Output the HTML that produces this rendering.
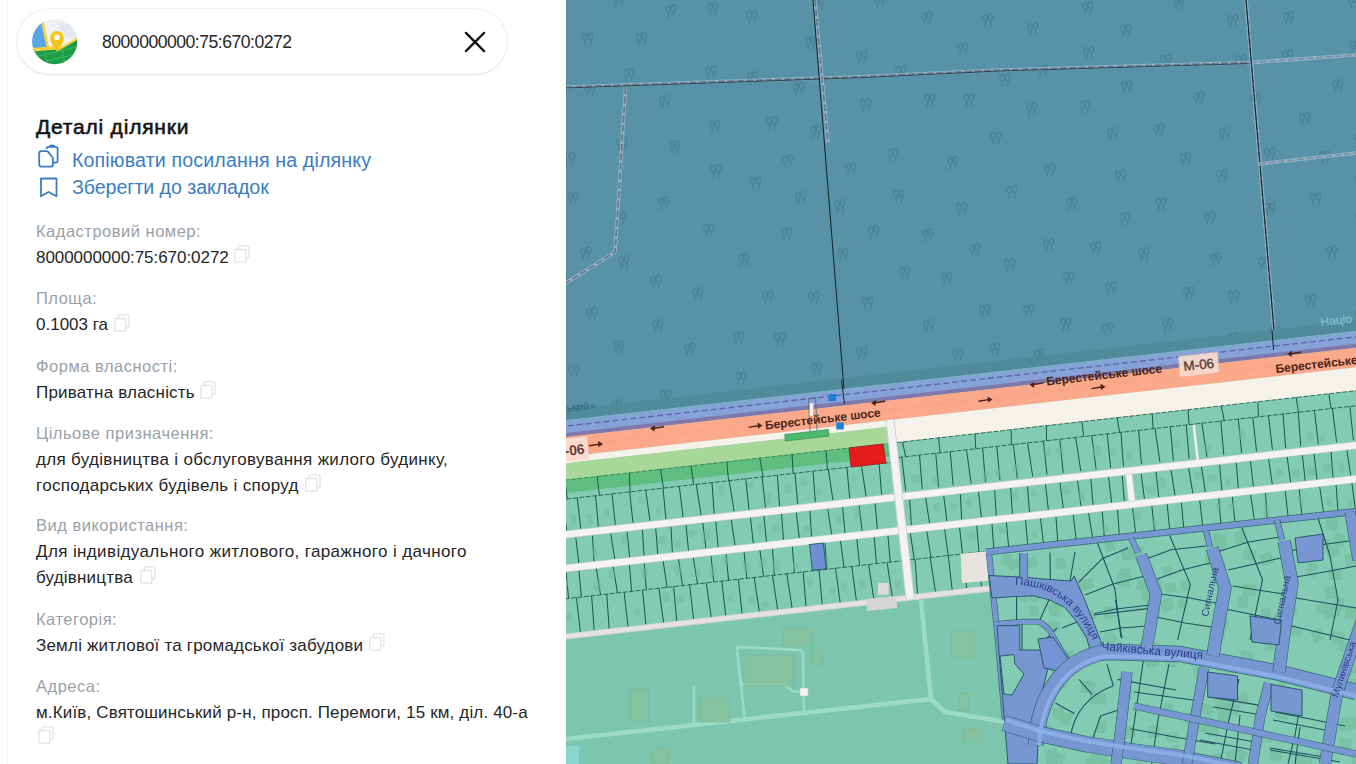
<!DOCTYPE html>
<html><head><meta charset="utf-8">
<style>
html,body{margin:0;padding:0;width:1356px;height:764px;overflow:hidden;background:#fff;}
body{position:relative;font-family:"Liberation Sans",sans-serif;}
.t{position:absolute;white-space:nowrap;line-height:1;}
.lab{font-size:16.5px;color:#9aa1a8;letter-spacing:0.5px;}
.val{font-size:17px;color:#262626;letter-spacing:0.2px;}
.lnk{font-size:19.6px;color:#3b7dc0;letter-spacing:0.15px;}
.cp{position:absolute;width:16px;height:18px;}
#map{position:absolute;left:566px;top:0;width:790px;height:764px;overflow:hidden;background:#5891a5;}
</style></head><body>
<!-- left panel faint borders -->
<div style="position:absolute;left:7px;top:0;width:1px;height:764px;background:#f6f6f6"></div>
<div style="position:absolute;left:559px;top:0;width:1px;height:764px;background:#fbfbfb"></div>

<!-- search card -->
<div style="position:absolute;left:17px;top:9px;width:490px;height:65px;border-radius:33px;background:#fff;box-shadow:0 1px 3px rgba(0,0,0,0.10), 0 0 0 1px rgba(0,0,0,0.035);"></div>
<svg style="position:absolute;left:32px;top:19px" width="46" height="46" viewBox="0 0 46 46">
  <defs><clipPath id="lc"><circle cx="22.7" cy="22.6" r="22.6"/></clipPath></defs>
  <g clip-path="url(#lc)">
    <rect x="0" y="0" width="46" height="46" fill="#eef2f5"/>
    <path d="M26,3 Q36,2 44,12 L46,22 L30,16 Z" fill="#e4e9ef"/>
    <polygon points="0,0 9,0 15,28 0,31" fill="#5aa6ea"/>
    <polygon points="8.5,0 11,0 17,28 14.5,28.5" fill="#f6d33a"/>
    <polygon points="0,30 25,28 26,31 46,19 46,46 0,46" fill="#1d9d47"/>
    <polygon points="0,29 25,27 26,29.5 46,18 46,20.5 26,32 25,30.5 0,32.5" fill="#f6d33a"/>
    <path d="M3,38 L44,28 M6,44 L44,35 M12,31 L16,46 M30,29 L33,46" stroke="#4cc46c" stroke-width="0.7" fill="none"/>
  </g>
  <path d="M25,32.5 C21,27 18.2,23.5 18.2,18.8 A6.8,6.8 0 0 1 31.8,18.8 C31.8,23.5 29,27 25,32.5 Z" fill="#f7c41a"/>
  <circle cx="25" cy="18.3" r="2.8" fill="#fff"/>
</svg>
<div class="t" style="letter-spacing:-0.1px;left:102px;top:34px;font-size:17.6px;color:#262626;letter-spacing:-0.5px">8000000000:75:670:0272</div>
<svg style="position:absolute;left:462px;top:29px" width="26" height="26" viewBox="0 0 26 26">
  <path d="M3.9,3.9 L22.1,22.1 M22.1,3.9 L3.9,22.1" stroke="#111" stroke-width="2.3" stroke-linecap="round"/>
</svg>

<!-- heading -->
<div class="t" style="left:36px;top:115.5px;font-size:21px;color:#151515;letter-spacing:0.8px;-webkit-text-stroke:0.6px #151515">Деталі ділянки</div>
<svg style="position:absolute;left:36px;top:144px" width="26" height="26" viewBox="0 0 26 26">
  <g fill="none" stroke="#3b7dc0" stroke-width="1.8" stroke-linejoin="round">
    <path d="M10.5,5 Q10.5,2.8 12.5,2.8 L19.5,2.8 Q21.6,2.8 21.6,5 L21.6,16.5 Q21.6,18.6 19.5,18.6 L16.9,18.6"/>
    <path d="M13.5,2.8 Q13.5,1.3 16,1.3 Q18.5,1.3 18.5,2.8"/>
    <path d="M3.2,9 Q3.2,7.1 5.2,7.1 L11.5,7.1 L16.9,14 L16.9,20.6 Q16.9,22.6 14.9,22.6 L5.2,22.6 Q3.2,22.6 3.2,20.6 Z"/>
  </g>
</svg>
<div class="t lnk" style="left:72px;top:150.5px">Копіювати посилання на ділянку</div>
<svg style="position:absolute;left:36px;top:175px" width="26" height="26" viewBox="0 0 26 26">
  <path d="M5,3.5 L20.5,3.5 L20.5,21.3 L12.6,17 L5,21.3 Z" fill="none" stroke="#3b7dc0" stroke-width="1.8" stroke-linejoin="round"/>
</svg>
<div class="t lnk" style="left:72px;top:178px;letter-spacing:-0.05px">Зберегти до закладок</div>

<div class="t lab" style="left:36px;top:222.7px">Кадастровий номер:</div>
<div class="t lab" style="left:36px;top:289.8px">Площа:</div>
<div class="t lab" style="left:36px;top:358.0px">Форма власності:</div>
<div class="t lab" style="left:36px;top:424.9px">Цільове призначення:</div>
<div class="t lab" style="left:36px;top:516.9px">Вид використання:</div>
<div class="t lab" style="left:36px;top:610.5px">Категорія:</div>
<div class="t lab" style="left:36px;top:678.2px">Адреса:</div>
<div class="t val" style="left:36px;top:249.1px;letter-spacing:-0.05px">8000000000:75:670:0272</div>
<div class="t val" style="letter-spacing:0.0px;left:36px;top:316.2px">0.1003 га</div>
<div class="t val" style="left:36px;top:383.8px">Приватна власність</div>
<div class="t val" style="letter-spacing:0.32px;left:36px;top:451.1px">для будівництва і обслуговування жилого будинку,</div>
<div class="t val" style="letter-spacing:0.3px;left:36px;top:476.6px">господарських будівель і споруд</div>
<div class="t val" style="letter-spacing:0.38px;left:36px;top:543.2px">Для індивідуального житлового, гаражного і дачного</div>
<div class="t val" style="left:36px;top:569.1px">будівництва</div>
<div class="t val" style="left:36px;top:637.2px">Землі житлової та громадської забудови</div>
<div class="t val" style="letter-spacing:0.15px;left:36px;top:703.6px">м.Київ, Святошинський р-н, просп. Перемоги, 15 км, діл. 40-а</div>
<svg class="cp" style="left:233.7px;top:244.7px" viewBox="0 0 16 18"><g fill="none" stroke="#e3e3e3" stroke-width="1.3"><path d="M4.2,4.5 L4.2,1.6 Q4.2,0.8 5,0.8 L14.2,0.8 Q15,0.8 15,1.6 L15,12.2 Q15,13 14.2,13 L11.8,13"/><rect x="0.8" y="4.5" width="11" height="12.7" rx="0.9"/></g></svg>
<svg class="cp" style="left:114.0px;top:314.0px" viewBox="0 0 16 18"><g fill="none" stroke="#e3e3e3" stroke-width="1.3"><path d="M4.2,4.5 L4.2,1.6 Q4.2,0.8 5,0.8 L14.2,0.8 Q15,0.8 15,1.6 L15,12.2 Q15,13 14.2,13 L11.8,13"/><rect x="0.8" y="4.5" width="11" height="12.7" rx="0.9"/></g></svg>
<svg class="cp" style="left:200.0px;top:381.0px" viewBox="0 0 16 18"><g fill="none" stroke="#e3e3e3" stroke-width="1.3"><path d="M4.2,4.5 L4.2,1.6 Q4.2,0.8 5,0.8 L14.2,0.8 Q15,0.8 15,1.6 L15,12.2 Q15,13 14.2,13 L11.8,13"/><rect x="0.8" y="4.5" width="11" height="12.7" rx="0.9"/></g></svg>
<svg class="cp" style="left:305.0px;top:474.0px" viewBox="0 0 16 18"><g fill="none" stroke="#e3e3e3" stroke-width="1.3"><path d="M4.2,4.5 L4.2,1.6 Q4.2,0.8 5,0.8 L14.2,0.8 Q15,0.8 15,1.6 L15,12.2 Q15,13 14.2,13 L11.8,13"/><rect x="0.8" y="4.5" width="11" height="12.7" rx="0.9"/></g></svg>
<svg class="cp" style="left:139.5px;top:565.5px" viewBox="0 0 16 18"><g fill="none" stroke="#e3e3e3" stroke-width="1.3"><path d="M4.2,4.5 L4.2,1.6 Q4.2,0.8 5,0.8 L14.2,0.8 Q15,0.8 15,1.6 L15,12.2 Q15,13 14.2,13 L11.8,13"/><rect x="0.8" y="4.5" width="11" height="12.7" rx="0.9"/></g></svg>
<svg class="cp" style="left:368.5px;top:633.0px" viewBox="0 0 16 18"><g fill="none" stroke="#e3e3e3" stroke-width="1.3"><path d="M4.2,4.5 L4.2,1.6 Q4.2,0.8 5,0.8 L14.2,0.8 Q15,0.8 15,1.6 L15,12.2 Q15,13 14.2,13 L11.8,13"/><rect x="0.8" y="4.5" width="11" height="12.7" rx="0.9"/></g></svg>
<svg class="cp" style="left:38.0px;top:726.0px" viewBox="0 0 16 18"><g fill="none" stroke="#e3e3e3" stroke-width="1.3"><path d="M4.2,4.5 L4.2,1.6 Q4.2,0.8 5,0.8 L14.2,0.8 Q15,0.8 15,1.6 L15,12.2 Q15,13 14.2,13 L11.8,13"/><rect x="0.8" y="4.5" width="11" height="12.7" rx="0.9"/></g></svg>

<div id="map"><svg width="790" height="764" viewBox="566 0 790 764" style="position:absolute;left:0;top:0;display:block">
<defs>
<g id="tr" fill="none" stroke="#4b8498" stroke-width="1.5" stroke-linecap="round"><path d="M3.6,8.5 C1,7 1.2,1.8 4,1.8 C6.8,1.8 7,6 5,8.5 L3.8,13.5"/><path d="M9,7.5 C6.4,6 6.6,0.8 9.4,0.8 C12.2,0.8 12.4,5 10.4,7.5 L9.2,12.5"/></g>
</defs>
<rect x="566" y="0" width="790" height="764" fill="#5792a6"/>
<g><use href="#tr" x="691" y="287"/><use href="#tr" x="1065" y="197"/><use href="#tr" x="732" y="331"/><use href="#tr" x="1203" y="211"/><use href="#tr" x="962" y="93"/><use href="#tr" x="563" y="151"/><use href="#tr" x="1026" y="22"/><use href="#tr" x="1192" y="91"/><use href="#tr" x="745" y="10"/><use href="#tr" x="1354" y="308"/><use href="#tr" x="1257" y="256"/><use href="#tr" x="956" y="42"/><use href="#tr" x="1318" y="150"/><use href="#tr" x="683" y="342"/><use href="#tr" x="659" y="389"/><use href="#tr" x="921" y="228"/><use href="#tr" x="833" y="199"/><use href="#tr" x="1249" y="93"/><use href="#tr" x="1331" y="375"/><use href="#tr" x="1161" y="318"/><use href="#tr" x="1022" y="304"/><use href="#tr" x="657" y="196"/><use href="#tr" x="886" y="148"/><use href="#tr" x="581" y="32"/><use href="#tr" x="1132" y="417"/><use href="#tr" x="955" y="202"/><use href="#tr" x="737" y="253"/><use href="#tr" x="1003" y="258"/><use href="#tr" x="704" y="65"/><use href="#tr" x="837" y="389"/><use href="#tr" x="836" y="248"/><use href="#tr" x="804" y="36"/><use href="#tr" x="612" y="340"/><use href="#tr" x="1179" y="152"/><use href="#tr" x="1104" y="281"/><use href="#tr" x="1275" y="402"/><use href="#tr" x="884" y="415"/><use href="#tr" x="1325" y="245"/><use href="#tr" x="1263" y="202"/><use href="#tr" x="859" y="98"/><use href="#tr" x="1226" y="14"/><use href="#tr" x="765" y="116"/><use href="#tr" x="894" y="65"/><use href="#tr" x="615" y="137"/><use href="#tr" x="1154" y="197"/><use href="#tr" x="761" y="402"/><use href="#tr" x="978" y="304"/><use href="#tr" x="583" y="83"/><use href="#tr" x="1227" y="332"/><use href="#tr" x="1172" y="-4"/><use href="#tr" x="579" y="246"/><use href="#tr" x="1073" y="357"/><use href="#tr" x="1025" y="102"/><use href="#tr" x="1281" y="49"/><use href="#tr" x="635" y="32"/><use href="#tr" x="1082" y="46"/><use href="#tr" x="989" y="131"/><use href="#tr" x="861" y="296"/><use href="#tr" x="1126" y="366"/><use href="#tr" x="566" y="191"/><use href="#tr" x="761" y="290"/><use href="#tr" x="807" y="291"/><use href="#tr" x="923" y="93"/><use href="#tr" x="1063" y="404"/><use href="#tr" x="1269" y="326"/><use href="#tr" x="1059" y="317"/><use href="#tr" x="1217" y="404"/><use href="#tr" x="1347" y="-5"/><use href="#tr" x="809" y="125"/><use href="#tr" x="1120" y="80"/><use href="#tr" x="781" y="154"/><use href="#tr" x="1309" y="192"/><use href="#tr" x="710" y="403"/><use href="#tr" x="1304" y="294"/><use href="#tr" x="921" y="375"/><use href="#tr" x="855" y="50"/><use href="#tr" x="1190" y="344"/><use href="#tr" x="981" y="13"/><use href="#tr" x="709" y="164"/><use href="#tr" x="1209" y="252"/><use href="#tr" x="614" y="211"/><use href="#tr" x="984" y="381"/><use href="#tr" x="1263" y="147"/><use href="#tr" x="702" y="223"/><use href="#tr" x="664" y="4"/><use href="#tr" x="658" y="95"/><use href="#tr" x="898" y="266"/><use href="#tr" x="1078" y="100"/><use href="#tr" x="873" y="-6"/><use href="#tr" x="1089" y="241"/><use href="#tr" x="1019" y="419"/><use href="#tr" x="855" y="346"/><use href="#tr" x="1114" y="169"/><use href="#tr" x="1081" y="1"/><use href="#tr" x="1137" y="247"/><use href="#tr" x="649" y="275"/><use href="#tr" x="1033" y="348"/><use href="#tr" x="1234" y="54"/><use href="#tr" x="1101" y="322"/><use href="#tr" x="1353" y="132"/><use href="#tr" x="773" y="332"/><use href="#tr" x="1118" y="212"/><use href="#tr" x="922" y="319"/><use href="#tr" x="668" y="140"/><use href="#tr" x="610" y="399"/><use href="#tr" x="1043" y="163"/><use href="#tr" x="708" y="120"/><use href="#tr" x="1106" y="127"/><use href="#tr" x="1331" y="79"/><use href="#tr" x="749" y="176"/><use href="#tr" x="746" y="71"/><use href="#tr" x="1182" y="387"/><use href="#tr" x="1159" y="54"/><use href="#tr" x="1298" y="112"/><use href="#tr" x="946" y="156"/><use href="#tr" x="940" y="272"/><use href="#tr" x="1152" y="123"/><use href="#tr" x="1036" y="64"/><use href="#tr" x="810" y="362"/><use href="#tr" x="1042" y="238"/><use href="#tr" x="1313" y="411"/><use href="#tr" x="937" y="412"/><use href="#tr" x="651" y="319"/><use href="#tr" x="617" y="255"/><use href="#tr" x="844" y="162"/><use href="#tr" x="1005" y="185"/><use href="#tr" x="780" y="227"/><use href="#tr" x="612" y="-6"/><use href="#tr" x="567" y="364"/><use href="#tr" x="1215" y="169"/><use href="#tr" x="1253" y="369"/><use href="#tr" x="706" y="2"/><use href="#tr" x="920" y="11"/><use href="#tr" x="570" y="404"/><use href="#tr" x="585" y="307"/><use href="#tr" x="988" y="342"/><use href="#tr" x="1119" y="24"/><use href="#tr" x="812" y="-4"/><use href="#tr" x="792" y="82"/><use href="#tr" x="1227" y="290"/><use href="#tr" x="892" y="189"/><use href="#tr" x="1291" y="362"/><use href="#tr" x="622" y="68"/><use href="#tr" x="1182" y="286"/><use href="#tr" x="1218" y="127"/><use href="#tr" x="734" y="371"/><use href="#tr" x="1282" y="11"/><use href="#tr" x="1348" y="40"/><use href="#tr" x="802" y="415"/><use href="#tr" x="998" y="73"/><use href="#tr" x="1354" y="173"/><use href="#tr" x="968" y="243"/><use href="#tr" x="951" y="348"/><use href="#tr" x="1354" y="211"/><use href="#tr" x="867" y="225"/><use href="#tr" x="1350" y="417"/><use href="#tr" x="1322" y="334"/><use href="#tr" x="794" y="191"/><use href="#tr" x="1062" y="271"/></g>
<g transform="translate(566,420.6) rotate(-6.45)"><rect x="-80" y="-11" width="980" height="12" fill="#4f8b9b"/></g>
<rect x="566" y="0" width="7" height="764" fill="#6a8aa8" opacity="0.18"/>
<path d="M566,87 L866,76.5 L1000,70 L1250,62.6" fill="none" stroke="#8ab2c8" stroke-width="3.6" stroke-linejoin="round"/>
<path d="M566,87 L866,76.5 L1000,70 L1250,62.6" fill="none" stroke="#6e7584" stroke-width="1.7" stroke-dasharray="7 2.5" stroke-linejoin="round"/>
<path d="M566,88 L866,77.5 L1000,71 L1250,63.6" fill="none" stroke="#1d3a48" stroke-width="0.9"/>
<path d="M1250,62.6 L1356,55" fill="none" stroke="#8fb3c8" stroke-width="3.6" stroke-linejoin="round"/>
<path d="M1250,62.6 L1356,55" fill="none" stroke="#7f8ea6" stroke-width="1.7" stroke-dasharray="7 2.5" stroke-linejoin="round"/>
<path d="M625.5,87 L618.4,200 L615,252 L566,283" fill="none" stroke="#8ab2c8" stroke-width="3.6" stroke-linejoin="round"/>
<path d="M625.5,87 L618.4,200 L615,252 L566,283" fill="none" stroke="#6e7584" stroke-width="1.7" stroke-dasharray="7 2.5" stroke-linejoin="round"/>
<path d="M815,0 L828,144" fill="none" stroke="#8ab2c8" stroke-width="3.6" stroke-linejoin="round"/>
<path d="M815,0 L828,144" fill="none" stroke="#6e7584" stroke-width="1.7" stroke-dasharray="7 2.5" stroke-linejoin="round"/>
<path d="M813,0 L845,402" fill="none" stroke="#10222c" stroke-width="1"/>
<path d="M1246,0 L1274,330" fill="none" stroke="#8ab2c8" stroke-width="3.6" stroke-linejoin="round"/>
<path d="M1246,0 L1274,330" fill="none" stroke="#6e7584" stroke-width="1.7" stroke-dasharray="7 2.5" stroke-linejoin="round"/>
<path d="M1246,0 L1274,330" fill="none" stroke="#10222c" stroke-width="1"/>
<path d="M1259,164 L1356,153" fill="none" stroke="#8fb3c8" stroke-width="3.6" stroke-linejoin="round"/>
<path d="M1259,164 L1356,153" fill="none" stroke="#7f8ea6" stroke-width="1.7" stroke-dasharray="7 2.5" stroke-linejoin="round"/>
<g transform="translate(566,420.6) rotate(-6.45)">
<rect x="-80" y="0" width="980" height="500" fill="#84cbb3" />
<rect x="-80" y="0" width="980" height="16" fill="#86a2d8" />
<rect x="-80" y="-0.5" width="980" height="2.3" fill="#7eaacb" />
<rect x="-80" y="12.3" width="980" height="4.0" fill="#7f78aa" />
<line x1="-80" y1="5.5" x2="900" y2="5.5" stroke="#4f5f98" stroke-width="1.3" stroke-dasharray="6 3" opacity="0.85"/>
<rect x="-80" y="16.3" width="980" height="19.499999999999996" fill="#fca98b" />
<line x1="-80" y1="25.5" x2="900" y2="25.5" stroke="#f5a084" stroke-width="0.8"/>
<rect x="-80" y="35.8" width="398" height="6.700000000000003" fill="#f5f2ea" />
<rect x="-80" y="42.5" width="398" height="16.5" fill="#a7d89a" />
<rect x="-80" y="59" width="398" height="13" fill="#5ebf80" />
<rect x="326" y="35.8" width="574" height="23.200000000000003" fill="#f5f2ea" />
<rect x="-80" y="217" width="980" height="283" fill="#7dc6ae" />
<line x1="-80" y1="59" x2="318" y2="59" stroke="#2c7a50" stroke-width="0.9" stroke-dasharray="5 1.5" opacity="0.8"/>
<line x1="-80" y1="78" x2="318" y2="78" stroke="#155c44" stroke-width="0.9" stroke-dasharray="5 1.5" opacity="0.9"/>
<line x1="-80" y1="177" x2="318" y2="177" stroke="#155c44" stroke-width="0.9" stroke-dasharray="5 1.5" opacity="0.9"/>
<line x1="326" y1="59" x2="900" y2="59" stroke="#155c44" stroke-width="0.9" stroke-dasharray="5 1.5" opacity="0.9"/>
<line x1="326" y1="74" x2="900" y2="74" stroke="#155c44" stroke-width="0.9" stroke-dasharray="5 1.5" opacity="0.9"/>
<line x1="326" y1="177" x2="900" y2="177" stroke="#155c44" stroke-width="0.9" stroke-dasharray="5 1.5" opacity="0.9"/>
<line x1="-40.5" y1="59" x2="-41.6" y2="78" stroke="#155c44" stroke-width="1.0"/>
<line x1="-7.7" y1="59" x2="-7.6" y2="78" stroke="#155c44" stroke-width="1.0"/>
<line x1="24.7" y1="59" x2="24.8" y2="78" stroke="#155c44" stroke-width="1.0"/>
<line x1="57.0" y1="59" x2="55.7" y2="78" stroke="#155c44" stroke-width="1.0"/>
<line x1="88.4" y1="59" x2="89.3" y2="78" stroke="#155c44" stroke-width="1.0"/>
<line x1="119.2" y1="59" x2="119.6" y2="78" stroke="#155c44" stroke-width="1.0"/>
<line x1="155.1" y1="59" x2="154.8" y2="78" stroke="#155c44" stroke-width="1.0"/>
<line x1="188.4" y1="59" x2="189.5" y2="78" stroke="#155c44" stroke-width="1.0"/>
<line x1="220.9" y1="59" x2="219.7" y2="78" stroke="#155c44" stroke-width="1.0"/>
<line x1="255.1" y1="59" x2="254.2" y2="78" stroke="#155c44" stroke-width="1.0"/>
<line x1="287.9" y1="59" x2="287.5" y2="78" stroke="#155c44" stroke-width="1.0"/>
<line x1="-61.3" y1="78" x2="-62.6" y2="109" stroke="#155c44" stroke-width="1.0"/>
<line x1="-44.1" y1="78" x2="-44.4" y2="109" stroke="#155c44" stroke-width="1.0"/>
<line x1="-28.7" y1="78" x2="-28.8" y2="109" stroke="#155c44" stroke-width="1.0"/>
<line x1="-12.3" y1="78" x2="-11.7" y2="109" stroke="#155c44" stroke-width="1.0"/>
<line x1="2.5" y1="78" x2="2.6" y2="109" stroke="#155c44" stroke-width="1.0"/>
<line x1="20.9" y1="78" x2="20.3" y2="109" stroke="#155c44" stroke-width="1.0"/>
<line x1="37.5" y1="78" x2="37.3" y2="109" stroke="#155c44" stroke-width="1.0"/>
<line x1="55.2" y1="78" x2="55.1" y2="109" stroke="#155c44" stroke-width="1.0"/>
<line x1="71.4" y1="78" x2="72.2" y2="109" stroke="#155c44" stroke-width="1.0"/>
<line x1="88.8" y1="78" x2="88.2" y2="109" stroke="#155c44" stroke-width="1.0"/>
<line x1="105.2" y1="78" x2="105.5" y2="109" stroke="#155c44" stroke-width="1.0"/>
<line x1="122.3" y1="78" x2="123.6" y2="109" stroke="#155c44" stroke-width="1.0"/>
<line x1="138.1" y1="78" x2="136.8" y2="109" stroke="#155c44" stroke-width="1.0"/>
<line x1="155.4" y1="78" x2="156.9" y2="109" stroke="#155c44" stroke-width="1.0"/>
<line x1="172.1" y1="78" x2="171.8" y2="109" stroke="#155c44" stroke-width="1.0"/>
<line x1="188.5" y1="78" x2="188.4" y2="109" stroke="#155c44" stroke-width="1.0"/>
<line x1="203.9" y1="78" x2="202.6" y2="109" stroke="#155c44" stroke-width="1.0"/>
<line x1="221.6" y1="78" x2="220.8" y2="109" stroke="#155c44" stroke-width="1.0"/>
<line x1="239.8" y1="78" x2="238.6" y2="109" stroke="#155c44" stroke-width="1.0"/>
<line x1="255.2" y1="78" x2="256.3" y2="109" stroke="#155c44" stroke-width="1.0"/>
<line x1="273.9" y1="78" x2="273.2" y2="109" stroke="#155c44" stroke-width="1.0"/>
<line x1="288.5" y1="78" x2="289.7" y2="109" stroke="#155c44" stroke-width="1.0"/>
<line x1="306.3" y1="78" x2="305.3" y2="109" stroke="#155c44" stroke-width="1.0"/>
<line x1="-55.8" y1="117" x2="-55.8" y2="143" stroke="#155c44" stroke-width="1.0"/>
<line x1="-39.0" y1="117" x2="-40.4" y2="143" stroke="#155c44" stroke-width="1.0"/>
<line x1="-22.6" y1="117" x2="-22.4" y2="143" stroke="#155c44" stroke-width="1.0"/>
<line x1="-3.4" y1="117" x2="-3.3" y2="143" stroke="#155c44" stroke-width="1.0"/>
<line x1="13.4" y1="117" x2="12.1" y2="143" stroke="#155c44" stroke-width="1.0"/>
<line x1="31.8" y1="117" x2="32.9" y2="143" stroke="#155c44" stroke-width="1.0"/>
<line x1="48.2" y1="117" x2="47.9" y2="143" stroke="#155c44" stroke-width="1.0"/>
<line x1="63.7" y1="117" x2="62.4" y2="143" stroke="#155c44" stroke-width="1.0"/>
<line x1="77.1" y1="117" x2="76.1" y2="143" stroke="#155c44" stroke-width="1.0"/>
<line x1="92.4" y1="117" x2="90.9" y2="143" stroke="#155c44" stroke-width="1.0"/>
<line x1="107.6" y1="117" x2="107.1" y2="143" stroke="#155c44" stroke-width="1.0"/>
<line x1="124.4" y1="117" x2="124.7" y2="143" stroke="#155c44" stroke-width="1.0"/>
<line x1="137.5" y1="117" x2="137.0" y2="143" stroke="#155c44" stroke-width="1.0"/>
<line x1="153.0" y1="117" x2="154.0" y2="143" stroke="#155c44" stroke-width="1.0"/>
<line x1="172.4" y1="117" x2="172.3" y2="143" stroke="#155c44" stroke-width="1.0"/>
<line x1="186.0" y1="117" x2="185.6" y2="143" stroke="#155c44" stroke-width="1.0"/>
<line x1="203.7" y1="117" x2="202.7" y2="143" stroke="#155c44" stroke-width="1.0"/>
<line x1="218.5" y1="117" x2="218.6" y2="143" stroke="#155c44" stroke-width="1.0"/>
<line x1="232.3" y1="117" x2="230.9" y2="143" stroke="#155c44" stroke-width="1.0"/>
<line x1="250.1" y1="117" x2="251.2" y2="143" stroke="#155c44" stroke-width="1.0"/>
<line x1="265.1" y1="117" x2="264.7" y2="143" stroke="#155c44" stroke-width="1.0"/>
<line x1="281.7" y1="117" x2="281.8" y2="143" stroke="#155c44" stroke-width="1.0"/>
<line x1="297.9" y1="117" x2="297.1" y2="143" stroke="#155c44" stroke-width="1.0"/>
<line x1="-48.5" y1="150" x2="-47.5" y2="177" stroke="#155c44" stroke-width="1.0"/>
<line x1="-31.4" y1="150" x2="-30.7" y2="177" stroke="#155c44" stroke-width="1.0"/>
<line x1="-17.0" y1="150" x2="-17.4" y2="177" stroke="#155c44" stroke-width="1.0"/>
<line x1="-4.0" y1="150" x2="-4.6" y2="177" stroke="#155c44" stroke-width="1.0"/>
<line x1="13.5" y1="150" x2="14.8" y2="177" stroke="#155c44" stroke-width="1.0"/>
<line x1="30.4" y1="150" x2="31.8" y2="177" stroke="#155c44" stroke-width="1.0"/>
<line x1="46.9" y1="150" x2="46.0" y2="177" stroke="#155c44" stroke-width="1.0"/>
<line x1="61.7" y1="150" x2="60.8" y2="177" stroke="#155c44" stroke-width="1.0"/>
<line x1="80.7" y1="150" x2="81.7" y2="177" stroke="#155c44" stroke-width="1.0"/>
<line x1="96.3" y1="150" x2="97.2" y2="177" stroke="#155c44" stroke-width="1.0"/>
<line x1="111.0" y1="150" x2="112.3" y2="177" stroke="#155c44" stroke-width="1.0"/>
<line x1="128.8" y1="150" x2="128.8" y2="177" stroke="#155c44" stroke-width="1.0"/>
<line x1="144.1" y1="150" x2="143.6" y2="177" stroke="#155c44" stroke-width="1.0"/>
<line x1="162.2" y1="150" x2="161.9" y2="177" stroke="#155c44" stroke-width="1.0"/>
<line x1="178.1" y1="150" x2="178.8" y2="177" stroke="#155c44" stroke-width="1.0"/>
<line x1="190.8" y1="150" x2="189.7" y2="177" stroke="#155c44" stroke-width="1.0"/>
<line x1="210.8" y1="150" x2="209.8" y2="177" stroke="#155c44" stroke-width="1.0"/>
<line x1="229.1" y1="150" x2="229.5" y2="177" stroke="#155c44" stroke-width="1.0"/>
<line x1="243.6" y1="150" x2="242.5" y2="177" stroke="#155c44" stroke-width="1.0"/>
<line x1="259.3" y1="150" x2="259.7" y2="177" stroke="#155c44" stroke-width="1.0"/>
<line x1="275.7" y1="150" x2="275.5" y2="177" stroke="#155c44" stroke-width="1.0"/>
<line x1="293.2" y1="150" x2="292.4" y2="177" stroke="#155c44" stroke-width="1.0"/>
<line x1="307.0" y1="150" x2="306.3" y2="177" stroke="#155c44" stroke-width="1.0"/>
<line x1="-58.7" y1="177" x2="-59.0" y2="212" stroke="#155c44" stroke-width="1.0"/>
<line x1="-41.8" y1="177" x2="-42.3" y2="212" stroke="#155c44" stroke-width="1.0"/>
<line x1="-26.6" y1="177" x2="-25.4" y2="212" stroke="#155c44" stroke-width="1.0"/>
<line x1="-9.5" y1="177" x2="-9.5" y2="212" stroke="#155c44" stroke-width="1.0"/>
<line x1="5.8" y1="177" x2="4.4" y2="212" stroke="#155c44" stroke-width="1.0"/>
<line x1="21.0" y1="177" x2="19.5" y2="212" stroke="#155c44" stroke-width="1.0"/>
<line x1="38.5" y1="177" x2="38.5" y2="212" stroke="#155c44" stroke-width="1.0"/>
<line x1="57.0" y1="177" x2="56.5" y2="212" stroke="#155c44" stroke-width="1.0"/>
<line x1="73.5" y1="177" x2="74.3" y2="212" stroke="#155c44" stroke-width="1.0"/>
<line x1="88.3" y1="177" x2="87.5" y2="212" stroke="#155c44" stroke-width="1.0"/>
<line x1="104.4" y1="177" x2="104.5" y2="212" stroke="#155c44" stroke-width="1.0"/>
<line x1="121.1" y1="177" x2="122.3" y2="212" stroke="#155c44" stroke-width="1.0"/>
<line x1="136.8" y1="177" x2="136.8" y2="212" stroke="#155c44" stroke-width="1.0"/>
<line x1="153.5" y1="177" x2="153.3" y2="212" stroke="#155c44" stroke-width="1.0"/>
<line x1="169.4" y1="177" x2="170.7" y2="212" stroke="#155c44" stroke-width="1.0"/>
<line x1="187.8" y1="177" x2="189.1" y2="212" stroke="#155c44" stroke-width="1.0"/>
<line x1="202.2" y1="177" x2="203.6" y2="212" stroke="#155c44" stroke-width="1.0"/>
<line x1="218.7" y1="177" x2="217.6" y2="212" stroke="#155c44" stroke-width="1.0"/>
<line x1="234.7" y1="177" x2="233.9" y2="212" stroke="#155c44" stroke-width="1.0"/>
<line x1="251.2" y1="177" x2="252.0" y2="212" stroke="#155c44" stroke-width="1.0"/>
<line x1="267.6" y1="177" x2="268.3" y2="212" stroke="#155c44" stroke-width="1.0"/>
<line x1="284.6" y1="177" x2="285.8" y2="212" stroke="#155c44" stroke-width="1.0"/>
<line x1="303.1" y1="177" x2="304.5" y2="212" stroke="#155c44" stroke-width="1.0"/>
<line x1="332.0" y1="59" x2="333.4" y2="74" stroke="#155c44" stroke-width="1.0"/>
<line x1="368.3" y1="59" x2="368.1" y2="74" stroke="#155c44" stroke-width="1.0"/>
<line x1="404.9" y1="59" x2="404.0" y2="74" stroke="#155c44" stroke-width="1.0"/>
<line x1="441.3" y1="59" x2="439.9" y2="74" stroke="#155c44" stroke-width="1.0"/>
<line x1="476.7" y1="59" x2="475.3" y2="74" stroke="#155c44" stroke-width="1.0"/>
<line x1="512.6" y1="59" x2="512.6" y2="74" stroke="#155c44" stroke-width="1.0"/>
<line x1="547.9" y1="59" x2="548.8" y2="74" stroke="#155c44" stroke-width="1.0"/>
<line x1="583.2" y1="59" x2="582.5" y2="74" stroke="#155c44" stroke-width="1.0"/>
<line x1="619.3" y1="59" x2="618.7" y2="74" stroke="#155c44" stroke-width="1.0"/>
<line x1="652.8" y1="59" x2="654.0" y2="74" stroke="#155c44" stroke-width="1.0"/>
<line x1="689.6" y1="59" x2="688.5" y2="74" stroke="#155c44" stroke-width="1.0"/>
<line x1="728.2" y1="59" x2="728.8" y2="74" stroke="#155c44" stroke-width="1.0"/>
<line x1="761.0" y1="59" x2="761.6" y2="74" stroke="#155c44" stroke-width="1.0"/>
<line x1="796.8" y1="59" x2="798.1" y2="74" stroke="#155c44" stroke-width="1.0"/>
<line x1="835.5" y1="59" x2="834.2" y2="74" stroke="#155c44" stroke-width="1.0"/>
<line x1="870.7" y1="59" x2="871.8" y2="74" stroke="#155c44" stroke-width="1.0"/>
<line x1="329.5" y1="74" x2="329.7" y2="108" stroke="#155c44" stroke-width="1.0"/>
<line x1="347.4" y1="74" x2="346.3" y2="108" stroke="#155c44" stroke-width="1.0"/>
<line x1="363.8" y1="74" x2="362.7" y2="108" stroke="#155c44" stroke-width="1.0"/>
<line x1="378.3" y1="74" x2="377.4" y2="108" stroke="#155c44" stroke-width="1.0"/>
<line x1="394.7" y1="74" x2="395.5" y2="108" stroke="#155c44" stroke-width="1.0"/>
<line x1="410.9" y1="74" x2="409.9" y2="108" stroke="#155c44" stroke-width="1.0"/>
<line x1="425.2" y1="74" x2="424.5" y2="108" stroke="#155c44" stroke-width="1.0"/>
<line x1="441.8" y1="74" x2="442.0" y2="108" stroke="#155c44" stroke-width="1.0"/>
<line x1="456.2" y1="74" x2="457.5" y2="108" stroke="#155c44" stroke-width="1.0"/>
<line x1="472.1" y1="74" x2="471.9" y2="108" stroke="#155c44" stroke-width="1.0"/>
<line x1="488.5" y1="74" x2="488.2" y2="108" stroke="#155c44" stroke-width="1.0"/>
<line x1="504.5" y1="74" x2="505.9" y2="108" stroke="#155c44" stroke-width="1.0"/>
<line x1="520.7" y1="74" x2="521.3" y2="108" stroke="#155c44" stroke-width="1.0"/>
<line x1="536.3" y1="74" x2="535.9" y2="108" stroke="#155c44" stroke-width="1.0"/>
<line x1="550.1" y1="74" x2="548.8" y2="108" stroke="#155c44" stroke-width="1.0"/>
<line x1="567.9" y1="74" x2="566.9" y2="108" stroke="#155c44" stroke-width="1.0"/>
<line x1="584.4" y1="74" x2="585.5" y2="108" stroke="#155c44" stroke-width="1.0"/>
<line x1="599.8" y1="74" x2="599.0" y2="108" stroke="#155c44" stroke-width="1.0"/>
<line x1="615.9" y1="74" x2="614.8" y2="108" stroke="#155c44" stroke-width="1.0"/>
<line x1="631.5" y1="74" x2="632.9" y2="108" stroke="#155c44" stroke-width="1.0"/>
<line x1="650.6" y1="74" x2="649.8" y2="108" stroke="#155c44" stroke-width="1.0"/>
<line x1="668.2" y1="74" x2="667.7" y2="108" stroke="#155c44" stroke-width="1.0"/>
<line x1="682.8" y1="74" x2="682.7" y2="108" stroke="#155c44" stroke-width="1.0"/>
<line x1="698.6" y1="74" x2="698.7" y2="108" stroke="#155c44" stroke-width="1.0"/>
<line x1="713.3" y1="74" x2="712.0" y2="108" stroke="#155c44" stroke-width="1.0"/>
<line x1="728.6" y1="74" x2="727.2" y2="108" stroke="#155c44" stroke-width="1.0"/>
<line x1="744.8" y1="74" x2="745.0" y2="108" stroke="#155c44" stroke-width="1.0"/>
<line x1="762.9" y1="74" x2="763.3" y2="108" stroke="#155c44" stroke-width="1.0"/>
<line x1="780.5" y1="74" x2="780.2" y2="108" stroke="#155c44" stroke-width="1.0"/>
<line x1="796.5" y1="74" x2="795.5" y2="108" stroke="#155c44" stroke-width="1.0"/>
<line x1="812.8" y1="74" x2="811.4" y2="108" stroke="#155c44" stroke-width="1.0"/>
<line x1="831.3" y1="74" x2="831.7" y2="108" stroke="#155c44" stroke-width="1.0"/>
<line x1="848.4" y1="74" x2="847.3" y2="108" stroke="#155c44" stroke-width="1.0"/>
<line x1="863.9" y1="74" x2="865.0" y2="108" stroke="#155c44" stroke-width="1.0"/>
<line x1="882.5" y1="74" x2="882.8" y2="108" stroke="#155c44" stroke-width="1.0"/>
<line x1="900.1" y1="74" x2="900.7" y2="108" stroke="#155c44" stroke-width="1.0"/>
<line x1="332.6" y1="117" x2="331.5" y2="143" stroke="#155c44" stroke-width="1.0"/>
<line x1="348.7" y1="117" x2="349.7" y2="143" stroke="#155c44" stroke-width="1.0"/>
<line x1="366.9" y1="117" x2="367.2" y2="143" stroke="#155c44" stroke-width="1.0"/>
<line x1="383.6" y1="117" x2="382.1" y2="143" stroke="#155c44" stroke-width="1.0"/>
<line x1="401.9" y1="117" x2="401.9" y2="143" stroke="#155c44" stroke-width="1.0"/>
<line x1="418.2" y1="117" x2="416.9" y2="143" stroke="#155c44" stroke-width="1.0"/>
<line x1="434.3" y1="117" x2="433.1" y2="143" stroke="#155c44" stroke-width="1.0"/>
<line x1="451.2" y1="117" x2="450.3" y2="143" stroke="#155c44" stroke-width="1.0"/>
<line x1="469.3" y1="117" x2="469.3" y2="143" stroke="#155c44" stroke-width="1.0"/>
<line x1="483.8" y1="117" x2="484.3" y2="143" stroke="#155c44" stroke-width="1.0"/>
<line x1="501.6" y1="117" x2="502.1" y2="143" stroke="#155c44" stroke-width="1.0"/>
<line x1="515.0" y1="117" x2="514.2" y2="143" stroke="#155c44" stroke-width="1.0"/>
<line x1="532.8" y1="117" x2="533.0" y2="143" stroke="#155c44" stroke-width="1.0"/>
<line x1="546.5" y1="117" x2="545.8" y2="143" stroke="#155c44" stroke-width="1.0"/>
<line x1="565.5" y1="117" x2="566.0" y2="143" stroke="#155c44" stroke-width="1.0"/>
<line x1="580.5" y1="117" x2="580.4" y2="143" stroke="#155c44" stroke-width="1.0"/>
<line x1="595.6" y1="117" x2="596.8" y2="143" stroke="#155c44" stroke-width="1.0"/>
<line x1="613.4" y1="117" x2="614.7" y2="143" stroke="#155c44" stroke-width="1.0"/>
<line x1="626.3" y1="117" x2="627.3" y2="143" stroke="#155c44" stroke-width="1.0"/>
<line x1="644.5" y1="117" x2="643.8" y2="143" stroke="#155c44" stroke-width="1.0"/>
<line x1="661.3" y1="117" x2="660.4" y2="143" stroke="#155c44" stroke-width="1.0"/>
<line x1="675.6" y1="117" x2="675.6" y2="143" stroke="#155c44" stroke-width="1.0"/>
<line x1="693.8" y1="117" x2="694.7" y2="143" stroke="#155c44" stroke-width="1.0"/>
<line x1="712.5" y1="117" x2="713.1" y2="143" stroke="#155c44" stroke-width="1.0"/>
<line x1="727.8" y1="117" x2="727.8" y2="143" stroke="#155c44" stroke-width="1.0"/>
<line x1="739.6" y1="117" x2="739.6" y2="143" stroke="#155c44" stroke-width="1.0"/>
<line x1="756.7" y1="117" x2="755.7" y2="143" stroke="#155c44" stroke-width="1.0"/>
<line x1="772.6" y1="117" x2="773.6" y2="143" stroke="#155c44" stroke-width="1.0"/>
<line x1="788.3" y1="117" x2="789.3" y2="143" stroke="#155c44" stroke-width="1.0"/>
<line x1="803.7" y1="117" x2="804.3" y2="143" stroke="#155c44" stroke-width="1.0"/>
<line x1="819.8" y1="117" x2="819.4" y2="143" stroke="#155c44" stroke-width="1.0"/>
<line x1="837.9" y1="117" x2="838.1" y2="143" stroke="#155c44" stroke-width="1.0"/>
<line x1="852.0" y1="117" x2="851.3" y2="143" stroke="#155c44" stroke-width="1.0"/>
<line x1="865.6" y1="117" x2="866.6" y2="143" stroke="#155c44" stroke-width="1.0"/>
<line x1="883.7" y1="117" x2="882.9" y2="143" stroke="#155c44" stroke-width="1.0"/>
<line x1="897.8" y1="117" x2="896.9" y2="143" stroke="#155c44" stroke-width="1.0"/>
<line x1="329.4" y1="150" x2="330.5" y2="177" stroke="#155c44" stroke-width="1.0"/>
<line x1="346.0" y1="150" x2="347.3" y2="177" stroke="#155c44" stroke-width="1.0"/>
<line x1="364.0" y1="150" x2="364.6" y2="177" stroke="#155c44" stroke-width="1.0"/>
<line x1="379.1" y1="150" x2="379.0" y2="177" stroke="#155c44" stroke-width="1.0"/>
<line x1="396.3" y1="150" x2="395.6" y2="177" stroke="#155c44" stroke-width="1.0"/>
<line x1="411.7" y1="150" x2="410.6" y2="177" stroke="#155c44" stroke-width="1.0"/>
<line x1="426.2" y1="150" x2="425.6" y2="177" stroke="#155c44" stroke-width="1.0"/>
<line x1="445.5" y1="150" x2="444.8" y2="177" stroke="#155c44" stroke-width="1.0"/>
<line x1="460.5" y1="150" x2="460.7" y2="177" stroke="#155c44" stroke-width="1.0"/>
<line x1="476.1" y1="150" x2="475.0" y2="177" stroke="#155c44" stroke-width="1.0"/>
<line x1="493.5" y1="150" x2="493.5" y2="177" stroke="#155c44" stroke-width="1.0"/>
<line x1="508.8" y1="150" x2="510.3" y2="177" stroke="#155c44" stroke-width="1.0"/>
<line x1="522.7" y1="150" x2="521.8" y2="177" stroke="#155c44" stroke-width="1.0"/>
<line x1="538.1" y1="150" x2="536.8" y2="177" stroke="#155c44" stroke-width="1.0"/>
<line x1="553.2" y1="150" x2="553.4" y2="177" stroke="#155c44" stroke-width="1.0"/>
<line x1="572.6" y1="150" x2="572.3" y2="177" stroke="#155c44" stroke-width="1.0"/>
<line x1="588.0" y1="150" x2="587.6" y2="177" stroke="#155c44" stroke-width="1.0"/>
<line x1="602.3" y1="150" x2="601.7" y2="177" stroke="#155c44" stroke-width="1.0"/>
<line x1="620.8" y1="150" x2="620.8" y2="177" stroke="#155c44" stroke-width="1.0"/>
<line x1="639.9" y1="150" x2="639.1" y2="177" stroke="#155c44" stroke-width="1.0"/>
<line x1="653.6" y1="150" x2="653.3" y2="177" stroke="#155c44" stroke-width="1.0"/>
<line x1="671.9" y1="150" x2="672.9" y2="177" stroke="#155c44" stroke-width="1.0"/>
<line x1="687.0" y1="150" x2="685.6" y2="177" stroke="#155c44" stroke-width="1.0"/>
<line x1="706.8" y1="150" x2="706.7" y2="177" stroke="#155c44" stroke-width="1.0"/>
<line x1="720.9" y1="150" x2="720.6" y2="177" stroke="#155c44" stroke-width="1.0"/>
<line x1="741.5" y1="150" x2="742.5" y2="177" stroke="#155c44" stroke-width="1.0"/>
<line x1="758.0" y1="150" x2="756.9" y2="177" stroke="#155c44" stroke-width="1.0"/>
<line x1="773.9" y1="150" x2="774.4" y2="177" stroke="#155c44" stroke-width="1.0"/>
<line x1="792.6" y1="150" x2="793.1" y2="177" stroke="#155c44" stroke-width="1.0"/>
<line x1="809.3" y1="150" x2="809.5" y2="177" stroke="#155c44" stroke-width="1.0"/>
<line x1="824.8" y1="150" x2="824.0" y2="177" stroke="#155c44" stroke-width="1.0"/>
<line x1="842.5" y1="150" x2="841.9" y2="177" stroke="#155c44" stroke-width="1.0"/>
<line x1="856.2" y1="150" x2="856.6" y2="177" stroke="#155c44" stroke-width="1.0"/>
<line x1="873.0" y1="150" x2="871.7" y2="177" stroke="#155c44" stroke-width="1.0"/>
<line x1="890.9" y1="150" x2="890.6" y2="177" stroke="#155c44" stroke-width="1.0"/>
<line x1="331.3" y1="177" x2="329.8" y2="212" stroke="#155c44" stroke-width="1.0"/>
<line x1="346.5" y1="177" x2="347.9" y2="212" stroke="#155c44" stroke-width="1.0"/>
<line x1="364.7" y1="177" x2="364.7" y2="212" stroke="#155c44" stroke-width="1.0"/>
<line x1="378.2" y1="177" x2="379.5" y2="212" stroke="#155c44" stroke-width="1.0"/>
<line x1="395.6" y1="177" x2="394.1" y2="212" stroke="#155c44" stroke-width="1.0"/>
<line x1="413.1" y1="177" x2="412.8" y2="212" stroke="#155c44" stroke-width="1.0"/>
<line x1="428.5" y1="177" x2="429.7" y2="212" stroke="#155c44" stroke-width="1.0"/>
<g fill="#72bb9c" opacity="0.45"><rect x="-53.6" y="84.4" width="6.0" height="7.7"/><rect x="-6.7" y="93.4" width="5.6" height="9.9"/><rect x="9.6" y="96.2" width="5.7" height="9.0"/><rect x="26.9" y="93.0" width="5.6" height="6.9"/><rect x="62.9" y="83.6" width="6.2" height="6.9"/><rect x="79.7" y="96.4" width="5.2" height="7.6"/><rect x="143.9" y="81.5" width="5.6" height="9.7"/><rect x="172.7" y="81.1" width="6.1" height="7.3"/><rect x="188.8" y="95.6" width="6.1" height="9.8"/><rect x="209.6" y="87.8" width="6.1" height="9.3"/><rect x="226.3" y="84.4" width="6.4" height="7.5"/><rect x="239.1" y="96.3" width="7.7" height="6.1"/><rect x="276.7" y="85.8" width="5.1" height="6.3"/><rect x="336.8" y="92.8" width="7.9" height="8.5"/><rect x="357.0" y="98.4" width="5.8" height="6.0"/><rect x="407.6" y="97.3" width="5.7" height="7.9"/><rect x="420.9" y="97.0" width="5.8" height="7.7"/><rect x="438.1" y="93.4" width="7.4" height="9.0"/><rect x="471.8" y="82.4" width="6.0" height="7.4"/><rect x="483.5" y="81.6" width="7.3" height="7.0"/><rect x="520.4" y="85.1" width="7.9" height="9.5"/><rect x="537.4" y="88.6" width="5.3" height="8.0"/><rect x="552.9" y="93.4" width="6.3" height="8.5"/><rect x="600.8" y="87.6" width="7.5" height="7.2"/><rect x="631.8" y="96.9" width="5.7" height="7.0"/><rect x="666.8" y="84.5" width="6.2" height="10.0"/><rect x="734.2" y="95.4" width="6.4" height="9.3"/><rect x="746.8" y="99.0" width="5.9" height="6.5"/><rect x="796.0" y="94.4" width="7.6" height="7.8"/><rect x="828.8" y="87.1" width="6.8" height="8.5"/><rect x="848.1" y="92.7" width="5.6" height="7.0"/><rect x="865.4" y="84.3" width="5.0" height="7.3"/><rect x="-54.3" y="120.7" width="5.6" height="9.2"/><rect x="-37.6" y="121.1" width="6.2" height="8.2"/><rect x="-23.7" y="123.8" width="7.1" height="7.6"/><rect x="10.0" y="130.9" width="6.7" height="7.4"/><rect x="41.8" y="120.1" width="5.6" height="8.9"/><rect x="77.6" y="125.7" width="7.5" height="7.6"/><rect x="94.3" y="130.7" width="5.0" height="8.2"/><rect x="108.8" y="121.8" width="6.9" height="7.5"/><rect x="123.0" y="125.1" width="6.6" height="9.7"/><rect x="178.4" y="124.9" width="5.4" height="9.8"/><rect x="192.2" y="127.7" width="7.8" height="7.6"/><rect x="222.8" y="131.1" width="7.4" height="6.9"/><rect x="257.1" y="124.8" width="5.7" height="7.6"/><rect x="276.0" y="120.5" width="5.7" height="8.9"/><rect x="355.5" y="123.6" width="6.8" height="8.2"/><rect x="372.1" y="125.5" width="6.7" height="7.7"/><rect x="388.4" y="122.7" width="5.1" height="8.5"/><rect x="434.7" y="121.6" width="5.5" height="7.9"/><rect x="454.0" y="120.5" width="5.3" height="7.8"/><rect x="485.9" y="120.6" width="7.2" height="9.1"/><rect x="500.5" y="128.7" width="6.1" height="9.8"/><rect x="569.5" y="131.0" width="7.9" height="8.0"/><rect x="581.9" y="123.6" width="7.4" height="9.7"/><rect x="618.2" y="121.9" width="7.7" height="7.1"/><rect x="632.0" y="126.7" width="7.8" height="6.8"/><rect x="648.4" y="132.4" width="5.1" height="6.7"/><rect x="699.1" y="128.6" width="7.4" height="6.5"/><rect x="715.6" y="130.4" width="7.6" height="8.2"/><rect x="730.9" y="129.2" width="8.0" height="8.5"/><rect x="747.2" y="128.9" width="8.0" height="8.3"/><rect x="762.3" y="129.0" width="5.5" height="9.0"/><rect x="781.6" y="126.7" width="6.9" height="9.9"/><rect x="795.9" y="128.5" width="5.0" height="6.1"/><rect x="812.0" y="122.4" width="6.5" height="9.6"/><rect x="844.8" y="124.5" width="5.0" height="7.4"/><rect x="861.6" y="127.3" width="6.8" height="8.4"/><rect x="-56.3" y="154.7" width="5.4" height="9.7"/><rect x="-37.3" y="157.6" width="6.9" height="9.5"/><rect x="-21.1" y="157.4" width="5.0" height="8.6"/><rect x="8.7" y="163.9" width="7.8" height="8.9"/><rect x="25.4" y="153.8" width="6.6" height="7.6"/><rect x="57.6" y="155.2" width="6.7" height="9.8"/><rect x="90.6" y="156.6" width="6.9" height="9.3"/><rect x="111.7" y="161.2" width="5.1" height="9.6"/><rect x="124.7" y="161.9" width="7.5" height="9.0"/><rect x="140.4" y="153.6" width="5.7" height="6.4"/><rect x="159.6" y="161.7" width="7.2" height="8.8"/><rect x="176.1" y="159.9" width="6.7" height="7.7"/><rect x="189.2" y="162.8" width="6.9" height="9.9"/><rect x="209.3" y="166.3" width="5.8" height="6.9"/><rect x="238.3" y="165.4" width="7.6" height="7.3"/><rect x="386.4" y="155.7" width="7.2" height="8.3"/><rect x="417.7" y="154.5" width="7.7" height="6.6"/><rect x="450.7" y="163.3" width="5.4" height="6.1"/><rect x="520.6" y="164.1" width="6.8" height="7.5"/><rect x="553.3" y="154.2" width="7.6" height="9.7"/><rect x="571.2" y="165.1" width="5.3" height="6.1"/><rect x="636.2" y="156.0" width="5.3" height="6.4"/><rect x="648.8" y="157.2" width="6.3" height="6.1"/><rect x="683.2" y="162.5" width="6.0" height="9.9"/><rect x="717.6" y="157.6" width="6.2" height="7.7"/><rect x="746.2" y="162.5" width="5.6" height="9.4"/><rect x="767.6" y="166.9" width="5.0" height="6.8"/><rect x="783.1" y="155.4" width="6.5" height="8.0"/><rect x="796.5" y="164.0" width="6.0" height="9.3"/><rect x="814.6" y="154.3" width="5.6" height="8.8"/><rect x="848.0" y="160.7" width="7.4" height="8.8"/><rect x="865.9" y="154.2" width="6.2" height="7.6"/><rect x="-35.5" y="191.0" width="5.6" height="7.1"/><rect x="-23.0" y="191.7" width="7.7" height="6.9"/><rect x="45.8" y="194.8" width="6.0" height="6.6"/><rect x="76.7" y="182.5" width="6.3" height="9.1"/><rect x="90.5" y="186.6" width="7.7" height="7.0"/><rect x="141.1" y="191.5" width="5.5" height="7.0"/><rect x="161.5" y="196.2" width="6.0" height="6.8"/><rect x="173.3" y="202.2" width="7.9" height="6.4"/><rect x="221.5" y="184.2" width="5.6" height="8.6"/><rect x="243.0" y="194.8" width="5.1" height="7.6"/><rect x="254.4" y="192.8" width="6.9" height="7.9"/><rect x="272.2" y="191.1" width="7.2" height="9.6"/><rect x="308.7" y="195.6" width="5.7" height="8.9"/><rect x="385.4" y="188.6" width="5.9" height="8.5"/><rect x="454.2" y="188.7" width="6.3" height="7.8"/><rect x="501.7" y="189.7" width="7.0" height="9.1"/><rect x="536.9" y="201.0" width="6.6" height="6.6"/><rect x="552.6" y="194.8" width="5.3" height="8.3"/><rect x="568.1" y="188.1" width="6.9" height="9.3"/><rect x="602.1" y="182.6" width="7.1" height="7.6"/><rect x="633.7" y="180.3" width="5.2" height="7.1"/><rect x="649.4" y="185.4" width="6.3" height="8.8"/><rect x="666.3" y="184.2" width="7.2" height="9.8"/><rect x="701.7" y="198.2" width="5.6" height="6.5"/><rect x="734.7" y="187.8" width="6.7" height="6.9"/><rect x="795.6" y="197.3" width="5.9" height="8.2"/><rect x="813.0" y="185.6" width="7.6" height="7.1"/><rect x="832.5" y="186.5" width="5.6" height="6.0"/><rect x="846.8" y="193.4" width="5.9" height="7.9"/></g>
<rect x="-80" y="109.4" width="980" height="7.699999999999989" fill="#c9d0ce" />
<rect x="-80" y="110" width="980" height="6.5" fill="#f4f2f2" />
<rect x="-80" y="142.9" width="980" height="7.699999999999989" fill="#c9d0ce" />
<rect x="-80" y="143.5" width="980" height="6.5" fill="#f4f2f2" />
<rect x="550" y="116" width="6.5" height="28" fill="#f4f2f2" stroke="#c9d0ce" stroke-width="0.6"/>
<rect x="622" y="75" width="2.5" height="35" fill="#eef0ee"/>
<rect x="228" y="150.5" width="14" height="26" fill="#6f8fd3" stroke="#1f5160" stroke-width="0.8"/>
<rect x="-80" y="211.5" width="540" height="6.0" fill="#d6d6d6" />
<rect x="-80" y="212.5" width="540" height="3.6999999999999886" fill="#e4e2e2" />
<rect x="317.5" y="35.8" width="9" height="180" fill="#cfd3d2"/>
<rect x="318.5" y="35.8" width="7" height="180" fill="#f4f2f2"/>
</g>
<polygon points="784.8,434.5 828.5,429.5 829,436 785.3,441" fill="#4cba6c" stroke="#2f8a50" stroke-width="0.7"/>
<path d="M808.5,398 L810,431 M815.5,397 L817,430" stroke="#5b6b70" stroke-width="0.9"/>
<rect x="809.6" y="403" width="4" height="13" fill="#f2f2f2" stroke="#999" stroke-width="0.5"/>
<rect x="828.5" y="394" width="7.7" height="7.2" fill="#1f80d8"/>
<rect x="836.2" y="422.4" width="7.6" height="7.1" fill="#1f80d8"/>
<text x="765.4" y="429.5" transform="rotate(-6.45 765.4 429.5)" font-family="Liberation Sans" font-size="12" font-weight="bold" fill="#4a2418" stroke="#f7b597" stroke-width="0.4" paint-order="stroke">Берестейське шосе</text>
<text x="1046.7" y="385.5" transform="rotate(-6.45 1046.7 385.5)" font-family="Liberation Sans" font-size="12" font-weight="bold" fill="#4a2418" >Берестейське шосе</text>
<text x="1276" y="373" transform="rotate(-6.45 1276 373)" font-family="Liberation Sans" font-size="12" font-weight="bold" fill="#4a2418" >Берестейське</text>
<path d="M589,445.8 L599,444.2" stroke="#4a2418" stroke-width="1.4"/>
<polygon points="603,444 598,441 598.5,447.2" fill="#4a2418"/>
<path d="M664,426.7 L654,428.3" stroke="#4a2418" stroke-width="1.4"/>
<polygon points="650,428.5 655,425.3 654.5,431.5" fill="#4a2418"/>
<path d="M748.5,427.40000000000003 L758.5,425.8" stroke="#4a2418" stroke-width="1.4"/>
<polygon points="762.5,425.6 757.5,422.6 758.0,428.8" fill="#4a2418"/>
<path d="M885,401.2 L875,402.8" stroke="#4a2418" stroke-width="1.4"/>
<polygon points="871,403 876,399.8 875.5,406" fill="#4a2418"/>
<path d="M978.5,401.2 L988.5,399.59999999999997" stroke="#4a2418" stroke-width="1.4"/>
<polygon points="992.5,399.4 987.5,396.4 988.0,402.59999999999997" fill="#4a2418"/>
<path d="M1043.5,382.9 L1033.5,384.5" stroke="#4a2418" stroke-width="1.4"/>
<polygon points="1029.5,384.7 1034.5,381.5 1034.0,387.7" fill="#4a2418"/>
<path d="M1091.5,388.6 L1101.5,387.0" stroke="#4a2418" stroke-width="1.4"/>
<polygon points="1105.5,386.8 1100.5,383.8 1101.0,390.0" fill="#4a2418"/>
<path d="M1301,352.2 L1291,353.8" stroke="#4a2418" stroke-width="1.4"/>
<polygon points="1287,354 1292,350.8 1291.5,357" fill="#4a2418"/>
<polygon points="1178.5,356.5 1217.5,352 1219,372.5 1180,377" fill="#f6dccf" stroke="#e9c6b6" stroke-width="0.6" opacity="0.92"/>
<text x="1184" y="371" transform="rotate(-6.45 1184 371)" font-family="Liberation Sans" font-size="13.5" font-weight="normal" fill="#5e3a32" stroke="#5e3a32" stroke-width="0.35">M-06</text>
<polygon points="560,439 587,436.5 589,459.5 561,462" fill="#f8dbd0"/>
<text x="565" y="456" transform="rotate(-6.45 565 456)" font-family="Liberation Sans" font-size="14" font-weight="bold" fill="#6e3b30" >-06</text>
<text x="567" y="412" transform="rotate(-6.45 567 412)" font-family="Liberation Sans" font-size="11" font-weight="normal" fill="#2c6c7c" >ький»</text>
<text x="1321" y="326" transform="rotate(-6.45 1321 326)" font-family="Liberation Sans" font-size="12" font-weight="normal" fill="#8ec6d6" >Націо</text>
<path d="M566,739 L931,699 L921,600 M931,699 L945,712 L1006,722" fill="none" stroke="#9cdcc6" stroke-width="4.5" stroke-linejoin="round"/>
<path d="M745,721 L737,650 Q736,647 740,647 L799,650 Q803,651 803,655 L804,714 M742,684 L782,684 Q788,686 792,691 L802,692 M694,686 L694,726" fill="none" stroke="#9cdcc6" stroke-width="2.5" stroke-linejoin="round"/>
<rect x="800" y="688" width="8" height="8" fill="#f4f4f4" stroke="#bbb" stroke-width="0.6"/>
<rect x="783" y="628" width="29" height="18" fill="#86c29e" stroke="#79b894" stroke-width="0.7" opacity="0.8"/>
<rect x="812" y="650" width="11" height="15" fill="#86c29e" stroke="#79b894" stroke-width="0.7" opacity="0.8"/>
<rect x="744" y="655" width="51" height="31" fill="#86c29e" stroke="#79b894" stroke-width="0.7" opacity="0.8"/>
<rect x="629" y="689" width="20" height="32" fill="#86c29e" stroke="#79b894" stroke-width="0.7" opacity="0.8"/>
<rect x="700" y="698" width="30" height="24" fill="#86c29e" stroke="#79b894" stroke-width="0.7" opacity="0.8"/>
<rect x="652" y="748" width="17" height="16" fill="#86c29e" stroke="#79b894" stroke-width="0.7" opacity="0.8"/>
<rect x="951" y="631" width="23" height="27" fill="#86c29e" stroke="#79b894" stroke-width="0.7" opacity="0.8"/>
<rect x="959" y="693" width="10" height="18" fill="#86c29e" stroke="#79b894" stroke-width="0.7" opacity="0.8"/>
<rect x="963" y="729" width="19" height="13" fill="#86c29e" stroke="#79b894" stroke-width="0.7" opacity="0.8"/>
<rect x="566" y="746" width="13" height="18" fill="#8ad8cc"/>
<polygon points="960.7,553.8 989.3,551 990,580.8 962,583" fill="#e9e3df"/>
<rect x="878" y="583" width="10.6" height="11.7" fill="#dcdada"/>
<polygon points="866.5,599 896.8,596 897,608 867,611" fill="#d4d4d4"/>
<polygon points="986,549 1356,508 1356,764 1008,764 997,640" fill="#84cbb3"/>
<g fill="#74bc9d" stroke="#6aaf92" stroke-width="0.6" opacity="0.6"><rect x="1218.0" y="698.4" width="12.0" height="11.8" transform="rotate(10 1218 698)"/><rect x="1327.6" y="517.4" width="10.3" height="11.8" transform="rotate(6 1328 517)"/><rect x="1319.7" y="538.8" width="10.3" height="9.0" transform="rotate(2 1320 539)"/><rect x="1069.3" y="581.0" width="12.6" height="11.1" transform="rotate(-14 1069 581)"/><rect x="1281.8" y="545.2" width="11.1" height="8.5" transform="rotate(-20 1282 545)"/><rect x="1308.9" y="563.2" width="9.1" height="11.9" transform="rotate(15 1309 563)"/><rect x="1095.9" y="754.2" width="10.7" height="10.7" transform="rotate(-12 1096 754)"/><rect x="1334.4" y="685.4" width="12.8" height="11.6" transform="rotate(-8 1334 685)"/><rect x="1122.2" y="552.2" width="8.7" height="8.3" transform="rotate(-8 1122 552)"/><rect x="1238.1" y="595.8" width="9.5" height="11.3" transform="rotate(-1 1238 596)"/><rect x="1105.6" y="632.2" width="11.5" height="8.2" transform="rotate(19 1106 632)"/><rect x="1278.3" y="603.0" width="10.9" height="8.0" transform="rotate(-18 1278 603)"/><rect x="1056.2" y="752.6" width="9.0" height="11.0" transform="rotate(17 1056 753)"/><rect x="1334.8" y="597.5" width="9.8" height="10.1" transform="rotate(11 1335 597)"/><rect x="1029.5" y="700.1" width="12.0" height="11.4" transform="rotate(-19 1030 700)"/><rect x="1336.2" y="533.2" width="9.7" height="10.4" transform="rotate(17 1336 533)"/><rect x="1114.4" y="744.7" width="10.7" height="9.2" transform="rotate(-7 1114 745)"/><rect x="1044.5" y="685.1" width="13.0" height="8.6" transform="rotate(-18 1044 685)"/><rect x="1351.1" y="645.5" width="10.0" height="8.9" transform="rotate(4 1351 646)"/><rect x="1292.4" y="625.7" width="10.1" height="8.2" transform="rotate(17 1292 626)"/><rect x="1002.0" y="635.4" width="12.2" height="8.5" transform="rotate(9 1002 635)"/><rect x="1337.6" y="670.1" width="11.9" height="8.4" transform="rotate(-3 1338 670)"/><rect x="1044.6" y="724.6" width="9.5" height="9.8" transform="rotate(20 1045 725)"/><rect x="1301.9" y="757.9" width="10.3" height="10.0" transform="rotate(9 1302 758)"/><rect x="1165.3" y="583.9" width="10.0" height="8.6" transform="rotate(-5 1165 584)"/><rect x="1351.7" y="753.8" width="11.1" height="10.0" transform="rotate(-6 1352 754)"/><rect x="1022.6" y="579.2" width="11.9" height="11.5" transform="rotate(-6 1023 579)"/><rect x="1277.7" y="706.8" width="11.5" height="10.7" transform="rotate(10 1278 707)"/><rect x="1123.0" y="688.9" width="9.4" height="9.9" transform="rotate(11 1123 689)"/><rect x="1242.9" y="584.6" width="12.7" height="10.6" transform="rotate(3 1243 585)"/><rect x="1081.8" y="680.6" width="10.3" height="11.3" transform="rotate(6 1082 681)"/><rect x="1281.9" y="598.4" width="11.2" height="11.0" transform="rotate(13 1282 598)"/><rect x="1118.1" y="724.1" width="12.3" height="10.8" transform="rotate(19 1118 724)"/><rect x="1340.1" y="641.6" width="10.6" height="8.7" transform="rotate(13 1340 642)"/><rect x="1333.1" y="631.2" width="11.5" height="10.9" transform="rotate(9 1333 631)"/><rect x="1052.9" y="708.2" width="10.9" height="10.7" transform="rotate(-3 1053 708)"/><rect x="1218.3" y="706.8" width="11.2" height="10.9" transform="rotate(-19 1218 707)"/><rect x="1048.6" y="622.0" width="11.3" height="8.9" transform="rotate(7 1049 622)"/><rect x="1162.6" y="567.5" width="8.3" height="8.5" transform="rotate(-7 1163 567)"/><rect x="1056.4" y="559.1" width="8.2" height="9.9" transform="rotate(-5 1056 559)"/><rect x="1213.9" y="659.9" width="9.2" height="11.6" transform="rotate(-20 1214 660)"/><rect x="1138.4" y="580.7" width="10.1" height="8.5" transform="rotate(13 1138 581)"/><rect x="1214.6" y="534.1" width="10.7" height="9.4" transform="rotate(3 1215 534)"/><rect x="1340.7" y="717.9" width="10.1" height="11.3" transform="rotate(6 1341 718)"/><rect x="1125.2" y="546.1" width="11.0" height="10.3" transform="rotate(18 1125 546)"/><rect x="1344.3" y="664.6" width="9.8" height="11.6" transform="rotate(-20 1344 665)"/><rect x="1029.5" y="653.7" width="11.1" height="8.6" transform="rotate(5 1029 654)"/><rect x="1316.2" y="605.5" width="10.2" height="8.9" transform="rotate(-8 1316 605)"/><rect x="1345.9" y="606.5" width="12.8" height="11.7" transform="rotate(4 1346 606)"/><rect x="1085.1" y="759.2" width="10.5" height="9.7" transform="rotate(-7 1085 759)"/><rect x="1350.2" y="634.9" width="9.4" height="9.9" transform="rotate(-15 1350 635)"/><rect x="1217.5" y="622.6" width="9.5" height="11.1" transform="rotate(13 1218 623)"/><rect x="1090.2" y="747.6" width="11.9" height="9.0" transform="rotate(-9 1090 748)"/><rect x="1046.6" y="761.2" width="9.5" height="10.4" transform="rotate(-1 1047 761)"/><rect x="1226.0" y="663.4" width="11.7" height="8.5" transform="rotate(10 1226 663)"/><rect x="1100.1" y="645.5" width="9.7" height="9.2" transform="rotate(1 1100 646)"/><rect x="1159.9" y="601.7" width="11.7" height="10.4" transform="rotate(-19 1160 602)"/><rect x="1082.4" y="625.7" width="12.6" height="11.6" transform="rotate(2 1082 626)"/><rect x="1146.5" y="656.2" width="11.5" height="10.5" transform="rotate(-1 1147 656)"/><rect x="1323.7" y="607.9" width="10.0" height="11.4" transform="rotate(-12 1324 608)"/><rect x="1098.5" y="720.8" width="8.3" height="11.3" transform="rotate(8 1099 721)"/><rect x="1148.4" y="582.7" width="11.9" height="11.6" transform="rotate(-14 1148 583)"/><rect x="1165.1" y="649.5" width="10.5" height="9.3" transform="rotate(-14 1165 649)"/><rect x="1204.4" y="716.2" width="8.3" height="8.9" transform="rotate(13 1204 716)"/><rect x="1279.8" y="678.6" width="8.1" height="10.9" transform="rotate(19 1280 679)"/><rect x="1355.4" y="688.1" width="8.2" height="11.4" transform="rotate(-11 1355 688)"/><rect x="1226.3" y="751.9" width="11.6" height="8.5" transform="rotate(-8 1226 752)"/><rect x="1326.0" y="548.0" width="11.1" height="9.7" transform="rotate(-14 1326 548)"/><rect x="1029.6" y="606.3" width="8.4" height="8.2" transform="rotate(3 1030 606)"/><rect x="1261.7" y="733.1" width="8.7" height="9.7" transform="rotate(-7 1262 733)"/><rect x="1209.7" y="634.4" width="12.7" height="9.5" transform="rotate(-18 1210 634)"/><rect x="1245.2" y="548.4" width="11.2" height="10.0" transform="rotate(16 1245 548)"/><rect x="1193.1" y="667.7" width="9.3" height="10.2" transform="rotate(-10 1193 668)"/><rect x="1264.7" y="641.3" width="8.7" height="8.9" transform="rotate(-5 1265 641)"/><rect x="1259.7" y="555.5" width="11.6" height="10.6" transform="rotate(-17 1260 556)"/><rect x="1234.5" y="533.2" width="8.6" height="10.4" transform="rotate(-10 1234 533)"/><rect x="1311.0" y="632.0" width="9.6" height="11.2" transform="rotate(-19 1311 632)"/><rect x="1045.2" y="751.8" width="11.4" height="8.9" transform="rotate(-15 1045 752)"/><rect x="1346.0" y="678.9" width="12.1" height="8.6" transform="rotate(5 1346 679)"/><rect x="1119.7" y="569.7" width="9.7" height="10.5" transform="rotate(-6 1120 570)"/><rect x="1131.2" y="544.7" width="12.2" height="10.6" transform="rotate(12 1131 545)"/><rect x="1148.6" y="726.3" width="10.6" height="10.4" transform="rotate(3 1149 726)"/><rect x="1260.9" y="610.5" width="8.5" height="8.1" transform="rotate(-12 1261 610)"/><rect x="1166.0" y="703.1" width="8.0" height="9.9" transform="rotate(16 1166 703)"/><rect x="1216.7" y="618.9" width="10.3" height="8.4" transform="rotate(-14 1217 619)"/><rect x="1048.2" y="605.2" width="9.9" height="11.5" transform="rotate(-14 1048 605)"/><rect x="1083.0" y="580.5" width="8.8" height="9.1" transform="rotate(-11 1083 580)"/><rect x="1328.4" y="603.7" width="12.7" height="10.8" transform="rotate(7 1328 604)"/><rect x="1162.7" y="750.1" width="8.6" height="10.7" transform="rotate(-8 1163 750)"/><rect x="1236.9" y="695.2" width="8.8" height="8.8" transform="rotate(-19 1237 695)"/><rect x="1136.8" y="757.3" width="9.8" height="9.2" transform="rotate(-1 1137 757)"/><rect x="1093.6" y="696.0" width="11.6" height="8.7" transform="rotate(-10 1094 696)"/><rect x="1236.0" y="748.9" width="11.2" height="9.7" transform="rotate(19 1236 749)"/><rect x="1275.2" y="614.2" width="8.2" height="10.2" transform="rotate(20 1275 614)"/><rect x="1179.9" y="598.9" width="8.5" height="8.3" transform="rotate(16 1180 599)"/><rect x="1169.8" y="747.7" width="8.3" height="9.0" transform="rotate(-18 1170 748)"/><rect x="1083.5" y="613.5" width="9.5" height="8.2" transform="rotate(-18 1083 613)"/><rect x="1345.6" y="555.6" width="10.5" height="9.6" transform="rotate(1 1346 556)"/><rect x="1020.9" y="589.7" width="8.5" height="10.2" transform="rotate(17 1021 590)"/><rect x="1209.0" y="727.6" width="9.1" height="8.1" transform="rotate(2 1209 728)"/><rect x="1168.1" y="655.1" width="9.9" height="10.5" transform="rotate(9 1168 655)"/><rect x="1324.2" y="588.1" width="10.2" height="11.3" transform="rotate(-11 1324 588)"/><rect x="1032.3" y="589.2" width="8.4" height="11.1" transform="rotate(13 1032 589)"/><rect x="1104.5" y="543.0" width="8.4" height="9.0" transform="rotate(-17 1105 543)"/><rect x="1146.9" y="656.6" width="9.2" height="8.2" transform="rotate(8 1147 657)"/><rect x="1007.6" y="560.8" width="9.4" height="9.5" transform="rotate(-16 1008 561)"/><rect x="1143.9" y="589.7" width="11.8" height="10.2" transform="rotate(16 1144 590)"/><rect x="1229.4" y="703.0" width="10.9" height="9.8" transform="rotate(13 1229 703)"/><rect x="1229.9" y="752.5" width="11.6" height="10.8" transform="rotate(-9 1230 753)"/><rect x="1287.2" y="607.1" width="8.7" height="8.3" transform="rotate(-13 1287 607)"/><rect x="1086.1" y="681.7" width="9.4" height="8.3" transform="rotate(11 1086 682)"/><rect x="1120.7" y="728.4" width="12.7" height="10.4" transform="rotate(-11 1121 728)"/><rect x="1147.0" y="602.1" width="9.7" height="8.0" transform="rotate(3 1147 602)"/><rect x="1292.7" y="694.6" width="8.5" height="10.1" transform="rotate(-13 1293 695)"/><rect x="1249.7" y="623.3" width="12.7" height="11.2" transform="rotate(-15 1250 623)"/><rect x="1106.0" y="742.4" width="10.3" height="9.7" transform="rotate(-2 1106 742)"/><rect x="1270.9" y="747.8" width="10.7" height="11.9" transform="rotate(4 1271 748)"/><rect x="1027.9" y="716.8" width="10.1" height="8.2" transform="rotate(19 1028 717)"/><rect x="1166.4" y="734.0" width="10.0" height="8.9" transform="rotate(-9 1166 734)"/><rect x="1063.6" y="652.9" width="9.8" height="11.0" transform="rotate(-10 1064 653)"/><rect x="1118.7" y="573.1" width="12.9" height="11.4" transform="rotate(14 1119 573)"/><rect x="1216.2" y="611.8" width="8.7" height="11.3" transform="rotate(-0 1216 612)"/><rect x="1003.8" y="553.1" width="8.5" height="10.9" transform="rotate(16 1004 553)"/><rect x="1063.0" y="712.4" width="9.6" height="10.7" transform="rotate(15 1063 712)"/><rect x="1218.1" y="713.3" width="9.9" height="8.0" transform="rotate(0 1218 713)"/><rect x="1204.7" y="556.9" width="9.9" height="9.3" transform="rotate(-19 1205 557)"/><rect x="1104.2" y="607.2" width="10.4" height="10.8" transform="rotate(-4 1104 607)"/><rect x="1349.6" y="717.1" width="12.6" height="10.8" transform="rotate(7 1350 717)"/><rect x="1186.4" y="712.9" width="9.8" height="10.4" transform="rotate(7 1186 713)"/><rect x="1181.1" y="582.2" width="8.4" height="8.3" transform="rotate(-6 1181 582)"/><rect x="1202.4" y="702.9" width="11.6" height="9.2" transform="rotate(17 1202 703)"/><rect x="1090.5" y="691.9" width="8.4" height="11.0" transform="rotate(7 1091 692)"/><rect x="1340.2" y="737.9" width="11.4" height="11.4" transform="rotate(10 1340 738)"/><rect x="1213.6" y="563.0" width="10.6" height="11.6" transform="rotate(-10 1214 563)"/><rect x="1346.7" y="648.2" width="10.0" height="8.0" transform="rotate(-4 1347 648)"/><rect x="1055.2" y="675.9" width="12.5" height="11.6" transform="rotate(5 1055 676)"/><rect x="1242.1" y="650.6" width="11.6" height="9.5" transform="rotate(15 1242 651)"/><rect x="1067.9" y="587.6" width="9.3" height="10.5" transform="rotate(16 1068 588)"/><rect x="1051.3" y="670.7" width="11.8" height="8.9" transform="rotate(-17 1051 671)"/><rect x="1197.1" y="720.9" width="12.4" height="10.9" transform="rotate(-3 1197 721)"/><rect x="1145.7" y="644.3" width="12.5" height="9.2" transform="rotate(-9 1146 644)"/><rect x="1211.6" y="755.5" width="8.9" height="8.1" transform="rotate(-15 1212 756)"/><rect x="1195.9" y="663.3" width="8.9" height="8.8" transform="rotate(4 1196 663)"/><rect x="1226.6" y="685.3" width="11.6" height="8.2" transform="rotate(-1 1227 685)"/><rect x="1295.5" y="753.1" width="9.6" height="11.4" transform="rotate(6 1295 753)"/><rect x="1329.2" y="568.2" width="11.5" height="11.4" transform="rotate(-1 1329 568)"/><rect x="1026.9" y="559.2" width="8.8" height="8.4" transform="rotate(-14 1027 559)"/><rect x="1215.4" y="536.6" width="11.8" height="10.9" transform="rotate(13 1215 537)"/><rect x="1284.2" y="691.1" width="12.6" height="11.8" transform="rotate(5 1284 691)"/></g>
<path d="M1020,553 L1020,577 M1050,552.6 L1050.4,581.6 M1075,552 L1070,581" fill="none" stroke="#1f5160" stroke-width="1.1" stroke-linejoin="round"/>
<path d="M1016.6,596.5 L1016.6,625.6 M1049,599.7 L1039,622 M1022,621.7 L1022,650 M1045,640 L1057,628" fill="none" stroke="#1f5160" stroke-width="1.1" stroke-linejoin="round"/>
<path d="M1067,610 L1080,603 M1062,628 L1082,620" fill="none" stroke="#1f5160" stroke-width="1.1" stroke-linejoin="round"/>
<path d="M1097.5,543 L1114.8,588.7 L1121,637.4" fill="none" stroke="#1f5160" stroke-width="1.1" stroke-linejoin="round"/>
<path d="M1078.7,582.4 L1102,558.8 L1128,548 M1085,595 L1113,584 L1145,576 M1094,613.8 L1116,609 L1150,605 M1100,632 L1121,628 L1148,626" fill="none" stroke="#1f5160" stroke-width="1.1" stroke-linejoin="round"/>
<path d="M1169.8,535.7 L1190.3,584.4 L1177.7,640" fill="none" stroke="#1f5160" stroke-width="1.1" stroke-linejoin="round"/>
<path d="M1146,559 L1171,549.8 L1206,546 M1157,579 L1182,570 L1210,563 M1160,594 L1190,598 L1221,604 M1156,617 L1185,623 L1218,628" fill="none" stroke="#1f5160" stroke-width="1.1" stroke-linejoin="round"/>
<path d="M1242,528 L1262.5,579.7 L1250,640" fill="none" stroke="#1f5160" stroke-width="1.1" stroke-linejoin="round"/>
<path d="M1218.5,551.4 L1248.4,542 L1280,537 M1228,570 L1254.6,564 L1285,557 M1232.7,586 L1262.5,590.7 L1290,595 M1228,609.5 L1281.4,620.5" fill="none" stroke="#1f5160" stroke-width="1.1" stroke-linejoin="round"/>
<path d="M1318,518 L1330,556 L1338,600 L1330,640 M1290,551 L1320,545 L1356,540 M1296,577 L1330,571 L1356,566 M1296,598 L1356,608 M1292,626 L1350,640" fill="none" stroke="#1f5160" stroke-width="1.1" stroke-linejoin="round"/>
<path d="M1143.4,660 L1130.5,748 M1169,664.4 L1158,720 L1151.6,764 M1239,679 L1228.7,721 L1220,764 M1302,695 L1295,735 L1288,764" fill="none" stroke="#1f5160" stroke-width="1.1" stroke-linejoin="round"/>
<path d="M1117.6,679.4 L1176,690 M1130.5,728.8 L1176,737.3 L1215,744 M1207.7,696.6 L1260,705.4 M1200,740 L1253,750 M1275,712 L1345,726 M1270,750 L1340,762" fill="none" stroke="#1f5160" stroke-width="1.1" stroke-linejoin="round"/>
<path d="M1094,615 L1147.7,608.6 M1115.5,600 L1122,638.6" fill="none" stroke="#1f5160" stroke-width="1.1" stroke-linejoin="round"/>
<path d="M1134,692 L1200,701 M1213,707 L1262,715 M1273,720 L1335,732 M1205,733 L1255,742 M1270,748 L1330,758 M1240,715 L1235,764 M1300,727 L1295,764" fill="none" stroke="#1f5160" stroke-width="1.1" stroke-linejoin="round"/>
<path d="M1079,679.4 L1092,694.4 M1055.4,703 L1074.7,713.7 M1107,664.4 L1113.3,685.8" fill="none" stroke="#1f5160" stroke-width="1.1" stroke-linejoin="round"/>
<path d="M1070.4,737 Q1076,700 1113.3,685.8 M1091.9,741 L1100.5,716 L1119.8,709.4" fill="none" stroke="#1f5160" stroke-width="1.1" stroke-linejoin="round"/>
<path d="M1008,660 L1012,700 M1022,650 L1038,664" fill="none" stroke="#1f5160" stroke-width="1.1" stroke-linejoin="round"/>
<path d="M986,552 L1356,511.5" fill="none" stroke="#1f5160" stroke-width="6.8" stroke-linejoin="round" stroke-linecap="butt" opacity="0.8"/>
<path d="M986,552 L1356,511.5" fill="none" stroke="#7797d2" stroke-width="5.5" stroke-linejoin="round" stroke-linecap="butt"/>
<path d="M989,554 L998,640 L1005,720" fill="none" stroke="#1f5160" stroke-width="6.3" stroke-linejoin="round" stroke-linecap="butt" opacity="0.8"/>
<path d="M989,554 L998,640 L1005,720" fill="none" stroke="#7797d2" stroke-width="5" stroke-linejoin="round" stroke-linecap="butt"/>
<polygon points="989,575.5 1020,577 1050,579.5 1071,581 1074,576 1083.4,596.5 1100.7,640.5 1104,660 1092.8,660 1086.5,637.4 1075.5,620 1064.5,607.5 1049,599.7 1033,595.8 1016,596.5 992,598" fill="#7797d2" stroke="#1f5160" stroke-width="0.9" stroke-linejoin="round"/>
<path d="M1023.7,553 L1023.7,578" fill="none" stroke="#1f5160" stroke-width="8.3" stroke-linejoin="round" stroke-linecap="butt" opacity="0.8"/>
<path d="M1023.7,553 L1023.7,578" fill="none" stroke="#7797d2" stroke-width="7" stroke-linejoin="round" stroke-linecap="butt"/>
<path d="M997,624 L1022,621.7 L1039.4,621.7 Q1050,628 1053.5,637.4 L1067.7,660" fill="none" stroke="#1f5160" stroke-width="5.8" stroke-linejoin="round" stroke-linecap="butt" opacity="0.8"/>
<path d="M997,624 L1022,621.7 L1039.4,621.7 Q1050,628 1053.5,637.4 L1067.7,660" fill="none" stroke="#7797d2" stroke-width="4.5" stroke-linejoin="round" stroke-linecap="butt"/>
<polygon points="997,625.6 1019.8,625.6 1019.8,650 1042,650 1050,660 1040,700 1037,764 1008,764 998,640" fill="#7797d2" stroke="#1f5160" stroke-width="0.9" stroke-linejoin="round"/>
<polygon points="1000,656 1014,654.6 1015,664 1024,674 1012,695 1004,694" fill="#84cbb3" stroke="#1f5160" stroke-width="0.9" stroke-linejoin="round"/>
<polygon points="1038,639 1053,637 1069,660 1062,672 1044,668" fill="#7394d4" stroke="#1f5160" stroke-width="0.9" stroke-linejoin="round"/>
<path d="M1036,745 C1038,702 1058,660 1106,652 L1180,654 L1280,673 L1356,692" fill="none" stroke="#1f5160" stroke-width="16.3" stroke-linejoin="round" stroke-linecap="butt" opacity="0.8"/>
<path d="M1036,745 C1038,702 1058,660 1106,652 L1180,654 L1280,673 L1356,692" fill="none" stroke="#7797d2" stroke-width="15" stroke-linejoin="round" stroke-linecap="butt"/>
<path d="M1004,723 L1040,734 L1085,744 L1130,751 L1180,758 L1240,770" fill="none" stroke="#1f5160" stroke-width="16.3" stroke-linejoin="round" stroke-linecap="butt" opacity="0.8"/>
<path d="M1004,723 L1040,734 L1085,744 L1130,751 L1180,758 L1240,770" fill="none" stroke="#7797d2" stroke-width="15" stroke-linejoin="round" stroke-linecap="butt"/>
<path d="M1131,538 L1138,553" fill="none" stroke="#1f5160" stroke-width="6.3" stroke-linejoin="round" stroke-linecap="butt" opacity="0.8"/>
<path d="M1131,538 L1138,553" fill="none" stroke="#7797d2" stroke-width="5" stroke-linejoin="round" stroke-linecap="butt"/>
<path d="M1141,555 L1156,594 L1148,640 L1146,650" fill="none" stroke="#1f5160" stroke-width="12.3" stroke-linejoin="round" stroke-linecap="butt" opacity="0.8"/>
<path d="M1141,555 L1156,594 L1148,640 L1146,650" fill="none" stroke="#7797d2" stroke-width="11" stroke-linejoin="round" stroke-linecap="butt"/>
<path d="M1206,531 L1210,547" fill="none" stroke="#1f5160" stroke-width="6.3" stroke-linejoin="round" stroke-linecap="butt" opacity="0.8"/>
<path d="M1206,531 L1210,547" fill="none" stroke="#7797d2" stroke-width="5" stroke-linejoin="round" stroke-linecap="butt"/>
<path d="M1212,548 L1225,588 L1215.5,640 L1213,656" fill="none" stroke="#1f5160" stroke-width="13.3" stroke-linejoin="round" stroke-linecap="butt" opacity="0.8"/>
<path d="M1212,548 L1225,588 L1215.5,640 L1213,656" fill="none" stroke="#7797d2" stroke-width="12" stroke-linejoin="round" stroke-linecap="butt"/>
<path d="M1277,520 L1282,540" fill="none" stroke="#1f5160" stroke-width="6.3" stroke-linejoin="round" stroke-linecap="butt" opacity="0.8"/>
<path d="M1277,520 L1282,540" fill="none" stroke="#7797d2" stroke-width="5" stroke-linejoin="round" stroke-linecap="butt"/>
<path d="M1284,541 L1292,583 L1283,640 L1279,672" fill="none" stroke="#1f5160" stroke-width="13.3" stroke-linejoin="round" stroke-linecap="butt" opacity="0.8"/>
<path d="M1284,541 L1292,583 L1283,640 L1279,672" fill="none" stroke="#7797d2" stroke-width="12" stroke-linejoin="round" stroke-linecap="butt"/>
<path d="M1350,512 L1358,560" fill="none" stroke="#1f5160" stroke-width="11.3" stroke-linejoin="round" stroke-linecap="butt" opacity="0.8"/>
<path d="M1350,512 L1358,560" fill="none" stroke="#7797d2" stroke-width="10" stroke-linejoin="round" stroke-linecap="butt"/>
<path d="M1362,620 L1337,693 L1325,764" fill="none" stroke="#1f5160" stroke-width="12.3" stroke-linejoin="round" stroke-linecap="butt" opacity="0.8"/>
<path d="M1362,620 L1337,693 L1325,764" fill="none" stroke="#7797d2" stroke-width="11" stroke-linejoin="round" stroke-linecap="butt"/>
<path d="M1127,672 L1120,735 L1116,764" fill="none" stroke="#1f5160" stroke-width="11.3" stroke-linejoin="round" stroke-linecap="butt" opacity="0.8"/>
<path d="M1127,672 L1120,735 L1116,764" fill="none" stroke="#7797d2" stroke-width="10" stroke-linejoin="round" stroke-linecap="butt"/>
<path d="M1204,668 L1195,718 L1187,764" fill="none" stroke="#1f5160" stroke-width="10.3" stroke-linejoin="round" stroke-linecap="butt" opacity="0.8"/>
<path d="M1204,668 L1195,718 L1187,764" fill="none" stroke="#7797d2" stroke-width="9" stroke-linejoin="round" stroke-linecap="butt"/>
<path d="M1269,683 L1260,718 L1253,764" fill="none" stroke="#1f5160" stroke-width="10.3" stroke-linejoin="round" stroke-linecap="butt" opacity="0.8"/>
<path d="M1269,683 L1260,718 L1253,764" fill="none" stroke="#7797d2" stroke-width="9" stroke-linejoin="round" stroke-linecap="butt"/>
<path d="M1134,706 L1356,754" fill="none" stroke="#1f5160" stroke-width="7.3" stroke-linejoin="round" stroke-linecap="butt" opacity="0.8"/>
<path d="M1134,706 L1356,754" fill="none" stroke="#7797d2" stroke-width="6" stroke-linejoin="round" stroke-linecap="butt"/>
<polygon points="1207.7,672 1237.5,676 1237.5,700 1207.7,697" fill="#7797d2" stroke="#1f5160" stroke-width="0.9" stroke-linejoin="round"/>
<polygon points="1271,684.4 1302,690 1302,716 1271,711" fill="#7797d2" stroke="#1f5160" stroke-width="0.9" stroke-linejoin="round"/>
<polygon points="1295,538 1323,534 1323,560 1298,563" fill="#7797d2" stroke="#1f5160" stroke-width="0.9" stroke-linejoin="round"/>
<polygon points="1250,615.8 1281.4,620.5 1279,645 1252,642" fill="#7797d2" stroke="#1f5160" stroke-width="0.9" stroke-linejoin="round"/>
<path d="M1039,745 C1041,705 1061,664 1106,656 L1180,658 L1280,677 L1356,696" fill="none" stroke="#8cb0e8" stroke-width="4" opacity="0.85"/>
<path d="M1006,720 L1040,731 L1085,741 L1130,748 L1180,755 L1240,767" fill="none" stroke="#8cb0e8" stroke-width="4" opacity="0.85"/>
<path id="pashp" d="M1015,585 C1045,585 1075,598 1096,648" fill="none"/>
<text font-family="Liberation Sans" font-size="11.5" fill="#2c3f86"><textPath href="#pashp">Пашківська вулиця</textPath></text>
<text x="1101" y="650" transform="rotate(5 1101 650)" font-family="Liberation Sans" font-size="12" font-weight="normal" fill="#2c3f86" >Чайківська вулиця</text>
<text x="1208" y="617" transform="rotate(-78 1208 617)" font-family="Liberation Sans" font-size="10" font-weight="normal" fill="#2c3f86" >Сигнальна</text>
<text x="1280" y="625" transform="rotate(-78 1280 625)" font-family="Liberation Sans" font-size="10" font-weight="normal" fill="#2c3f86" >Сигнальна</text>
<text x="1338" y="698" transform="rotate(-72 1338 698)" font-family="Liberation Sans" font-size="10" font-weight="normal" fill="#2c3f86" >Мулинівська</text>
<path d="M841.5,380 L844.5,404" stroke="#10222c" stroke-width="1"/>
<path d="M1272,330 L1273.5,350" stroke="#10222c" stroke-width="1"/>
<polygon points="849,448 883,444 886,463 851,467" fill="#e81b1b" stroke="#9a2020" stroke-width="0.8"/>
</svg></div>
</body></html>
